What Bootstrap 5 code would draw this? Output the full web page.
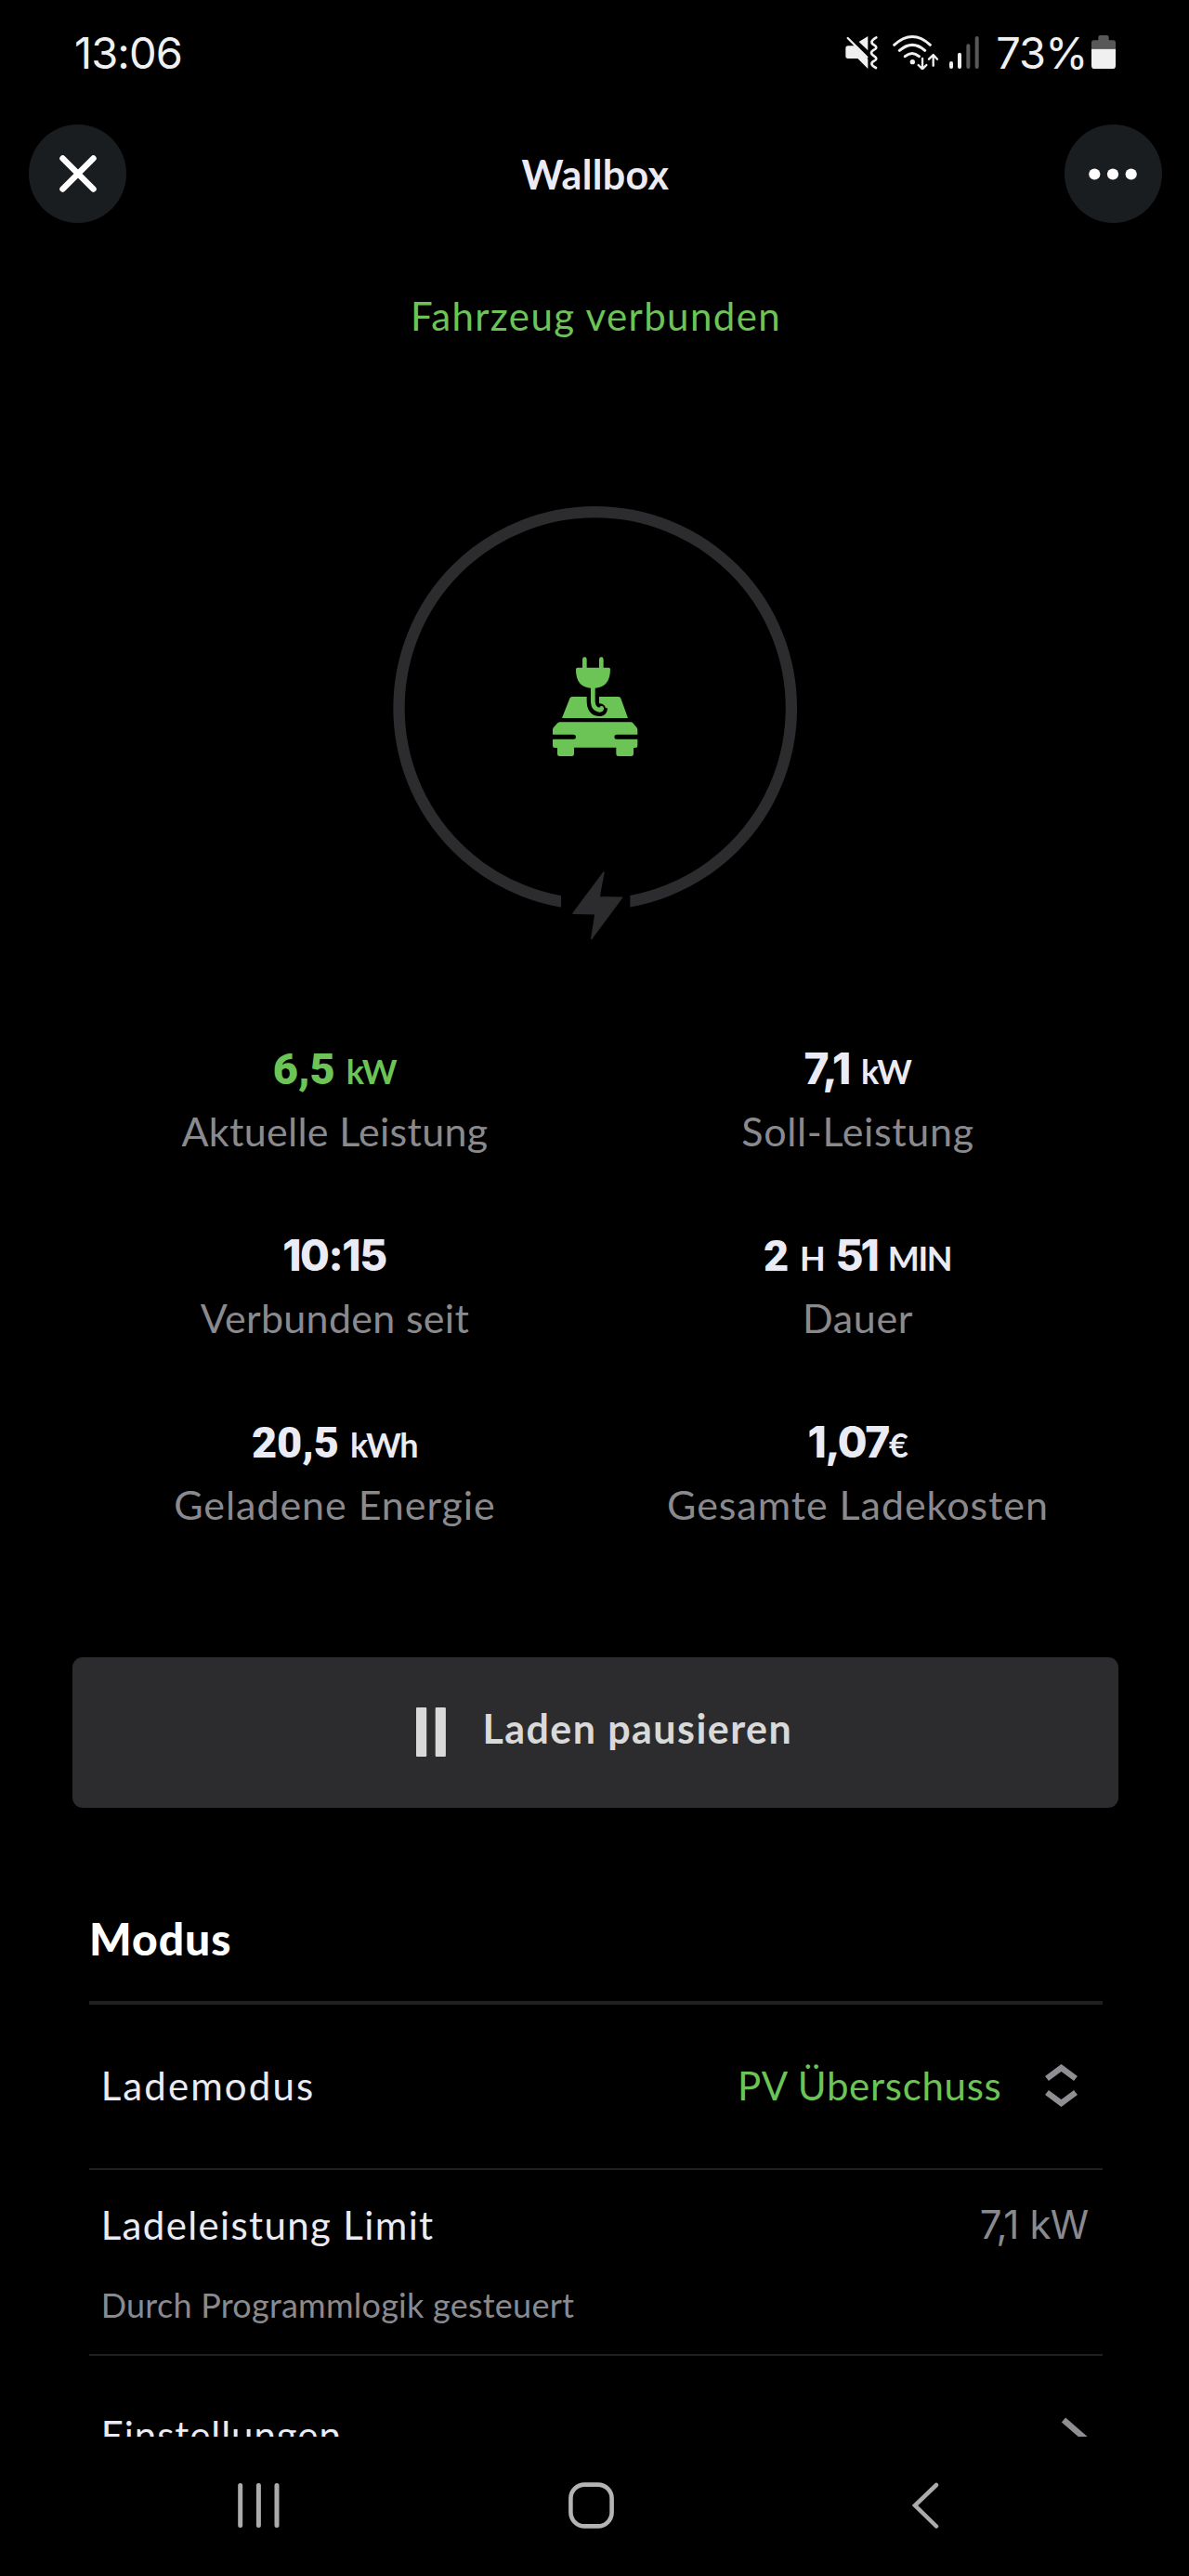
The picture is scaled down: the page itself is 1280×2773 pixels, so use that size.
<!DOCTYPE html>
<html lang="de" data-bs-theme="dark">
<head>
<meta charset="utf-8">
<meta name="viewport" content="width=device-width, initial-scale=1">
<title>Wallbox</title>
<link href="https://cdn.jsdelivr.net/npm/bootstrap@5.3.0/dist/css/bootstrap.min.css" rel="stylesheet">
<style>
  body { background:#000; color:#ebebf5; font-family:Lato,"Open Sans",sans-serif; line-height:1; }
  svg { display:block; flex:none; }
  .screen { width:1280px; height:2773px; background:#000; }
  .app-green { color:#6bc455; }
  .app-grey { color:#8a8a8e; }
  .inter { font-family:Inter,sans-serif; }

  .statusbar { height:134px; padding:28px 79px 0 80px; color:#f0f0f0; }
  .statusbar .inter { font-size:47px; line-height:58px; letter-spacing:-.9px; }
  .sys-icons { margin:8.7px 17px 0 0; }
  .battery { margin:10px 0 0 4.5px; }

  .topbar { height:106px; padding:0 29px 0 31px; }
  .round-btn { width:105px; height:106px; padding:0; border:0; background:#1a1d1f; }
  .title { font-size:43px; font-weight:700; letter-spacing:.36px; }

  .state { font-size:42px; line-height:54px; letter-spacing:1.38px; margin-top:73px; padding-left:3px; }
  .ring { margin-top:173px; padding-left:1px; }

  .stats { width:1126px; margin:104.6px 0 0 78.5px; }
  .stat { height:201.4px; }
  .value { font-size:47px; line-height:58px; height:71px; white-space:nowrap; }
  .value b, .value small { line-height:1; }
  .value b { font-family:Roboto,sans-serif; font-weight:900; letter-spacing:-.1px; }
  .value b.inter { font-family:Inter,sans-serif; font-weight:800; font-size:46px; letter-spacing:-1.4px; }
  .value b.narrow { letter-spacing:-3px; }
  .value small { font-size:36px; font-weight:700; letter-spacing:-1.4px; }
  .value .unit-gap { word-spacing:-2px; }
  .label { font-size:43px; line-height:54px; padding-left:1px; }
  .ls-a { letter-spacing:.3px; }
  .ls-b { letter-spacing:.66px; }
  .ls-c { letter-spacing:.95px; }

  .pause-btn { width:1126px; height:162px; margin:60px 0 0 78px; border:0; border-radius:11px; background:#2c2c2e; color:#d9d9d9; font-size:43px; font-weight:700; letter-spacing:1.44px; line-height:1; padding:0 0 0 19px; gap:39.5px; }
  .pause-btn span { padding-bottom:8px; }

  .modus { width:1090.5px; margin:112px 0 0 96px; height:565.6px; }
  .modus h2 { font-size:48px; line-height:58px; font-weight:900; letter-spacing:1px; margin:0; height:96.4px; }
  .line-row { border-top:2.5px solid #202021; font-size:42px; padding:0 15px 0 12.7px; }
  .row-mode { border-top-width:4px; height:180px; padding:0 27px 3px 12.7px; }
  .row-limit { height:200px; padding-top:32px; }
  .row-settings { padding-top:58px; height:120px; }
  .line-row .txt { line-height:54px; }
  .ls-mode { letter-spacing:2.1px; }
  .ls-limit { letter-spacing:1.36px; }
  .ls-pv { letter-spacing:.7px; }
  .sorter { margin-left:46px; }
  .kw { letter-spacing:-.75px; word-spacing:1px; }
  .hint { font-size:36px; line-height:46px; letter-spacing:.25px; margin-top:36px; }

  .navbar-sys { height:149.4px; padding:48.5px 0 0 256px; }
  .nav-home { margin-left:311px; }
  .nav-back { margin-left:321px; }
</style>
</head>
<body>
<div class="screen mx-auto d-flex flex-column overflow-hidden">
  <div class="statusbar d-flex align-items-start flex-shrink-0">
    <span class="inter me-auto">13:06</span>
    <svg class="sys-icons" width="146.7" height="38.7" viewBox="88 50 440 116" fill="none" stroke-linecap="round" stroke-linejoin="round">
      <g fill="#f0f0f0">
        <path d="M100 87h21l43 43v31l-33-33h-31q-8 0-8-8V95q0-8 8-8z"/>
        <path d="M135 74l29-18v46z"/>
        <circle cx="308" cy="139" r="8"/>
      </g>
      <g stroke="#f0f0f0">
        <path d="M99 62l62 62" stroke-width="7"/>
        <path d="M191 60q-26 14-6 25 12 8 0 14-20 10 0 22 12 8 0 14-20 10 5 23" stroke-width="8"/>
        <path d="M249 84Q308 31 365 84M266 102Q308 66 348 102M284 121Q307 102 329 121" stroke-width="9"/>
        <path d="M340 128v32M327 149l13 13 13-13M375 151v-33M361 130l14-14 13 14" stroke-width="7"/>
        <path d="M433 143v12M460 115v40" stroke-width="12"/>
      </g>
      <path d="M488 87v68M516 62v93" stroke="#585858" stroke-width="12"/>
    </svg>
    <span class="inter">73%</span>
    <svg class="battery" width="26" height="36" viewBox="0 0 78 108">
      <path d="M8 16h14V6q0-6 6-6h22q6 0 6 6v10h14q8 0 8 8v20H0V24q0-8 8-8z" fill="#585858"/>
      <path d="M0 44h78v54q0 10-10 10H10Q0 108 0 98z" fill="#f0f0f0"/>
    </svg>
  </div>

  <header class="topbar d-flex justify-content-between align-items-center flex-shrink-0">
    <button class="btn round-btn rounded-circle d-flex align-items-center justify-content-center" aria-label="Schließen">
      <svg width="40" height="40" viewBox="0 0 40 40" stroke="#fff" stroke-width="6.500" stroke-linecap="round"><path d="M3.500 3.500l33 33M36.500 3.500l-33 33"/></svg>
    </button>
    <span class="title">Wallbox</span>
    <button class="btn round-btn rounded-circle d-flex align-items-center justify-content-center" aria-label="Mehr">
      <svg width="52" height="13" viewBox="0 0 52 13" fill="#fff"><circle cx="6.300" cy="6.500" r="6.100"/><circle cx="26" cy="6.500" r="6.100"/><circle cx="45.700" cy="6.500" r="6.100"/></svg>
    </button>
  </header>

  <div class="state app-green text-center">Fahrzeug verbunden</div>

  <div class="ring d-flex justify-content-center">
    <svg width="442" height="475" viewBox="420 540 442 475">
      <clipPath id="gap"><path d="M420 540h442v475H678.300V900H604v115H420z"/></clipPath>
      <circle cx="640.700" cy="762.300" r="211.200" fill="none" stroke="#2c2c2e" stroke-width="12.300" clip-path="url(#gap)"/>
      <path d="M650 939L645 965.700L669.500 966.300L636.700 1010.500L641 983.700L617 983.300z" fill="#2c2c2e" stroke="#2c2c2e" stroke-width="1.500" stroke-linejoin="round"/>
      <g transform="translate(560 680) scale(.33333)">
        <g fill="#6bc455">
          <path d="M201 116V89q0-7 7-7t7 7v27h40V89q0-7 7-7t7 7v27h17q5 0 5 5 0 62-56 62t-55-62q0-5 5-5z"/>
          <path d="M168 210H318q5 0 7 5l23 64H135l25-64q2-5 8-5z"/>
          <path d="M128 292H356q5 0 8 3l12 14q3 4 3 8v15H311q-7 0-7 7.500t7 7.500h68v21q0 7-7 7h-6v20q0 7-7 7H317q-7 0-7-7V374H174v21q0 7-7 7H127q-7 0-7-7V375h-8q-7 0-7-7V347h68q7 0 7-7.500t-7-7.500H105V317q0-4 3-8l13-14q3-3 7-3z"/>
        </g>
        <path d="M235 196V226Q235 253 258 253Q262 253 262 247" fill="none" stroke="#000" stroke-width="40"/>
        <circle cx="257" cy="251" r="19.500" fill="#000"/>
        <path d="M235 178V226Q236 250 257 253Q263 253 263 247" fill="none" stroke="#6bc455" stroke-width="14" stroke-linecap="round" stroke-linejoin="round"/>
      </g>
    </svg>
  </div>

  <div class="stats row g-0 text-center">
    <div class="col-6 stat">
      <div class="value unit-gap app-green"><b>6,5</b> <small>kW</small></div>
      <div class="label app-grey ls-a">Aktuelle Leistung</div>
    </div>
    <div class="col-6 stat">
      <div class="value"><b class="inter">7,1</b> <small>kW</small></div>
      <div class="label app-grey ls-b">Soll-Leistung</div>
    </div>
    <div class="col-6 stat">
      <div class="value"><b class="inter">10:15</b></div>
      <div class="label app-grey ls-a">Verbunden seit</div>
    </div>
    <div class="col-6 stat">
      <div class="value"><b>2</b> <small>H</small> <b class="inter narrow">51</b> <small>MIN</small></div>
      <div class="label app-grey ls-b">Dauer</div>
    </div>
    <div class="col-6 stat">
      <div class="value"><b>20,5</b> <small>kWh</small></div>
      <div class="label app-grey ls-c">Geladene Energie</div>
    </div>
    <div class="col-6 stat">
      <div class="value"><b class="inter">1,07</b><small>€</small></div>
      <div class="label app-grey ls-c">Gesamte Ladekosten</div>
    </div>
  </div>

  <button class="btn pause-btn d-flex align-items-center justify-content-center flex-shrink-0">
    <svg width="32" height="53" viewBox="0 0 32 53" fill="#d9d9d9"><rect width="11.200" height="53" rx="1"/><rect x="20.700" width="11.200" height="53" rx="1"/></svg>
    <span>Laden pausieren</span>
  </button>

  <section class="modus overflow-hidden flex-shrink-0">
    <h2>Modus</h2>
    <div class="line-row row-mode d-flex align-items-center">
      <span class="txt ls-mode me-auto">Lademodus</span>
      <span class="txt ls-pv app-green">PV Überschuss</span>
      <svg class="sorter" width="35" height="46" viewBox="0 0 35 46" fill="none" stroke="#8e8e93" stroke-width="6.500"><path d="M2 15.500L17.500 4L33 15.500M2 30.500L17.500 42L33 30.500"/></svg>
    </div>
    <div class="line-row row-limit">
      <div class="d-flex justify-content-between">
        <span class="txt ls-limit">Ladeleistung Limit</span>
        <span class="txt kw inter app-grey">7,1 kW</span>
      </div>
      <div class="hint app-grey">Durch Programmlogik gesteuert</div>
    </div>
    <div class="line-row row-settings d-flex justify-content-between align-items-start">
      <span class="txt ls-c">Einstellungen</span>
      <svg class="mt-2" width="31" height="46" viewBox="0 0 31 46" fill="none" stroke="#8e8e93" stroke-width="6.500"><path d="M4 3L27 23L4 43"/></svg>
    </div>
  </section>

  <nav class="navbar-sys d-flex align-items-start flex-shrink-0">
    <svg width="45" height="50" viewBox="0 0 45 50" stroke="#ababab" stroke-width="5" stroke-linecap="round"><path d="M2.700 3.500v43M22.400 3.500v43M42 3.500v43"/></svg>
    <svg class="nav-home" width="49" height="50" viewBox="0 0 49 50"><rect x="2.400" y="2.600" width="44.200" height="44.800" rx="15" fill="none" stroke="#b4b4b4" stroke-width="4.600"/></svg>
    <svg class="nav-back" width="29" height="50" viewBox="0 0 29 50" fill="none" stroke="#ababab" stroke-width="4.500" stroke-linecap="round"><path d="M26 3L3 25L26 47.500"/></svg>
  </nav>
</div>
<script src="https://cdn.jsdelivr.net/npm/bootstrap@5.3.0/dist/js/bootstrap.bundle.min.js"></script>
</body>
</html>
